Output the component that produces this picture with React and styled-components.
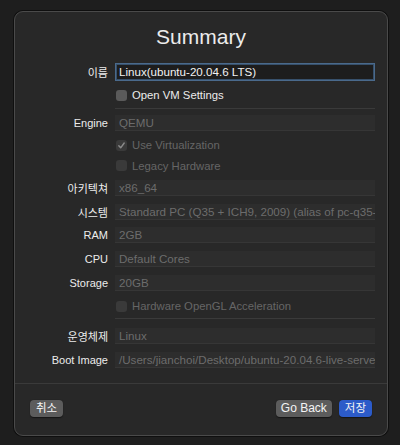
import React from 'react';
import styled, { createGlobalStyle } from 'styled-components';

const GlobalStyle = createGlobalStyle`
  html, body {
    margin: 0;
    padding: 0;
    background: #1e1e1e;
  }
  body {
    font-family: "Liberation Sans", "Noto Sans CJK KR", sans-serif;
    -webkit-font-smoothing: antialiased;
  }
`;

const Page = styled.div`
  width: 400px;
  height: 445px;
  padding: 11px 0 0 14px;
  box-sizing: border-box;
`;

const Panel = styled.div`
  width: 374px;
  height: 425px;
  box-sizing: border-box;
  background: #282828;
  border: 1px solid #4a4a4a;
  border-radius: 9px;
  box-shadow: 0 0 0 1px #0f0f0f;
  display: flex;
  flex-direction: column;
  overflow: hidden;
`;

const Title = styled.h1`
  margin: 11px 0 0;
  height: 28px;
  line-height: 28px;
  text-align: center;
  font-size: 21px;
  font-weight: 400;
  color: #ececec;
`;

const Form = styled.div`
  margin-top: 9px;
  padding-right: 12px;
  display: flex;
  flex-direction: column;
`;

const Row = styled.div`
  display: grid;
  grid-template-columns: 93px 1fr;
  column-gap: 7px;
  align-items: center;
  height: ${p => p.h || 24}px;
`;

const Label = styled.div`
  text-align: right;
  font-size: 11px;
  color: #ececec;
  white-space: nowrap;
`;

const Field = styled.div`
  height: 16px;
  line-height: 16px;
  box-sizing: border-box;
  padding: 0 4px;
  font-size: 11.6px;
  white-space: nowrap;
  overflow: hidden;
  background: ${p => (p.active ? '#1d1d1d' : '#2d2d2d')};
  color: ${p => (p.active ? '#f2f2f2' : '#6c6c6c')};
  border-bottom: 1px solid ${p => (p.active ? 'transparent' : '#363636')};
  ${p =>
    p.active &&
    `
    height: 18px;
    line-height: 16px;
    border: 1px solid #4a6a8c;
    box-shadow: inset 0 0 0 1px #37506b;
    padding: 0 3px;
  `}
`;

const Check = styled.div`
  grid-column: 2;
  display: flex;
  align-items: center;
  gap: 5px;
  font-size: 11.3px;
  color: ${p => (p.disabled ? '#666' : '#ececec')};
  padding-left: 1px;
`;

const Box = styled.span`
  width: 11px;
  height: 11px;
  border-radius: 3px;
  background: ${p => (p.disabled ? '#3a3a3a' : '#5a5a5a')};
  display: flex;
  align-items: center;
  justify-content: center;
`;

const Sep = styled.div`
  height: 1px;
  background: #3a3a3a;
  margin: ${p => p.m || '0'};
`;

const Footer = styled.div`
  border-top: 1px solid #3a3a3a;
  margin-top: 12px;
  flex: 1;
  display: flex;
  align-items: center;
  padding: 0 15px 2px 15px;
  gap: 7px;
`;

const Button = styled.button`
  height: 17px;
  padding: 0 ${p => p.px || 6}px;
  border: none;
  border-radius: 4px;
  font-family: inherit;
  font-size: ${p => p.fs || 11.5}px;
  color: #f4f4f4;
  background: ${p => (p.primary ? '#2c5bc9' : '#5c5c5c')};
  box-shadow: 0 0.5px 1px rgba(0, 0, 0, 0.5);
  line-height: 17px;
`;

const Spacer = styled.div`
  flex: 1;
`;

const CheckMark = () => (
  <svg width="9" height="9" viewBox="0 0 10 10">
    <path d="M2 5.3 L4.1 7.6 L8 2.2" fill="none" stroke="#8a8a8a" strokeWidth="1.6" strokeLinecap="round" strokeLinejoin="round" />
  </svg>
);

const FieldRow = ({ label, value, active, h }) => (
  <Row h={h}>
    <Label>{label}</Label>
    <Field active={active}>{value}</Field>
  </Row>
);

const CheckRow = ({ text, checked, disabled, h }) => (
  <Row h={h}>
    <Check disabled={disabled}>
      <Box disabled={disabled}>{checked && <CheckMark />}</Box>
      {text}
    </Check>
  </Row>
);

export default function App() {
  return (
    <Page>
      <GlobalStyle />
      <Panel>
        <Title>Summary</Title>
        <Form>
          <FieldRow label="이름" value="Linux(ubuntu-20.04.6 LTS)" active />
          <CheckRow text="Open VM Settings" h={22} />
          <Row h={5}>
            <span />
            <Sep m="2px 0 2px" />
          </Row>
          <FieldRow label="Engine" value="QEMU" />
          <CheckRow text="Use Virtualization" checked disabled h={20} />
          <CheckRow text="Legacy Hardware" disabled h={21} />
          <FieldRow label="아키텍쳐" value="x86_64" />
          <FieldRow label="시스템" value="Standard PC (Q35 + ICH9, 2009) (alias of pc-q35-" h={23} />
          <FieldRow label="RAM" value="2GB" />
          <FieldRow label="CPU" value="Default Cores" />
          <FieldRow label="Storage" value="20GB" />
          <CheckRow text="Hardware OpenGL Acceleration" disabled h={22} />
          <Row h={7}>
            <span />
            <Sep m="1px 0 5px" />
          </Row>
          <FieldRow label="운영체제" value="Linux" />
          <FieldRow label="Boot Image" value="/Users/jianchoi/Desktop/ubuntu-20.04.6-live-serve" h={23} />
        </Form>
        <Footer>
          <Button px={6}>취소</Button>
          <Spacer />
          <Button px={5} fs={12}>Go Back</Button>
          <Button primary px={6}>저장</Button>
        </Footer>
      </Panel>
    </Page>
  );
}
